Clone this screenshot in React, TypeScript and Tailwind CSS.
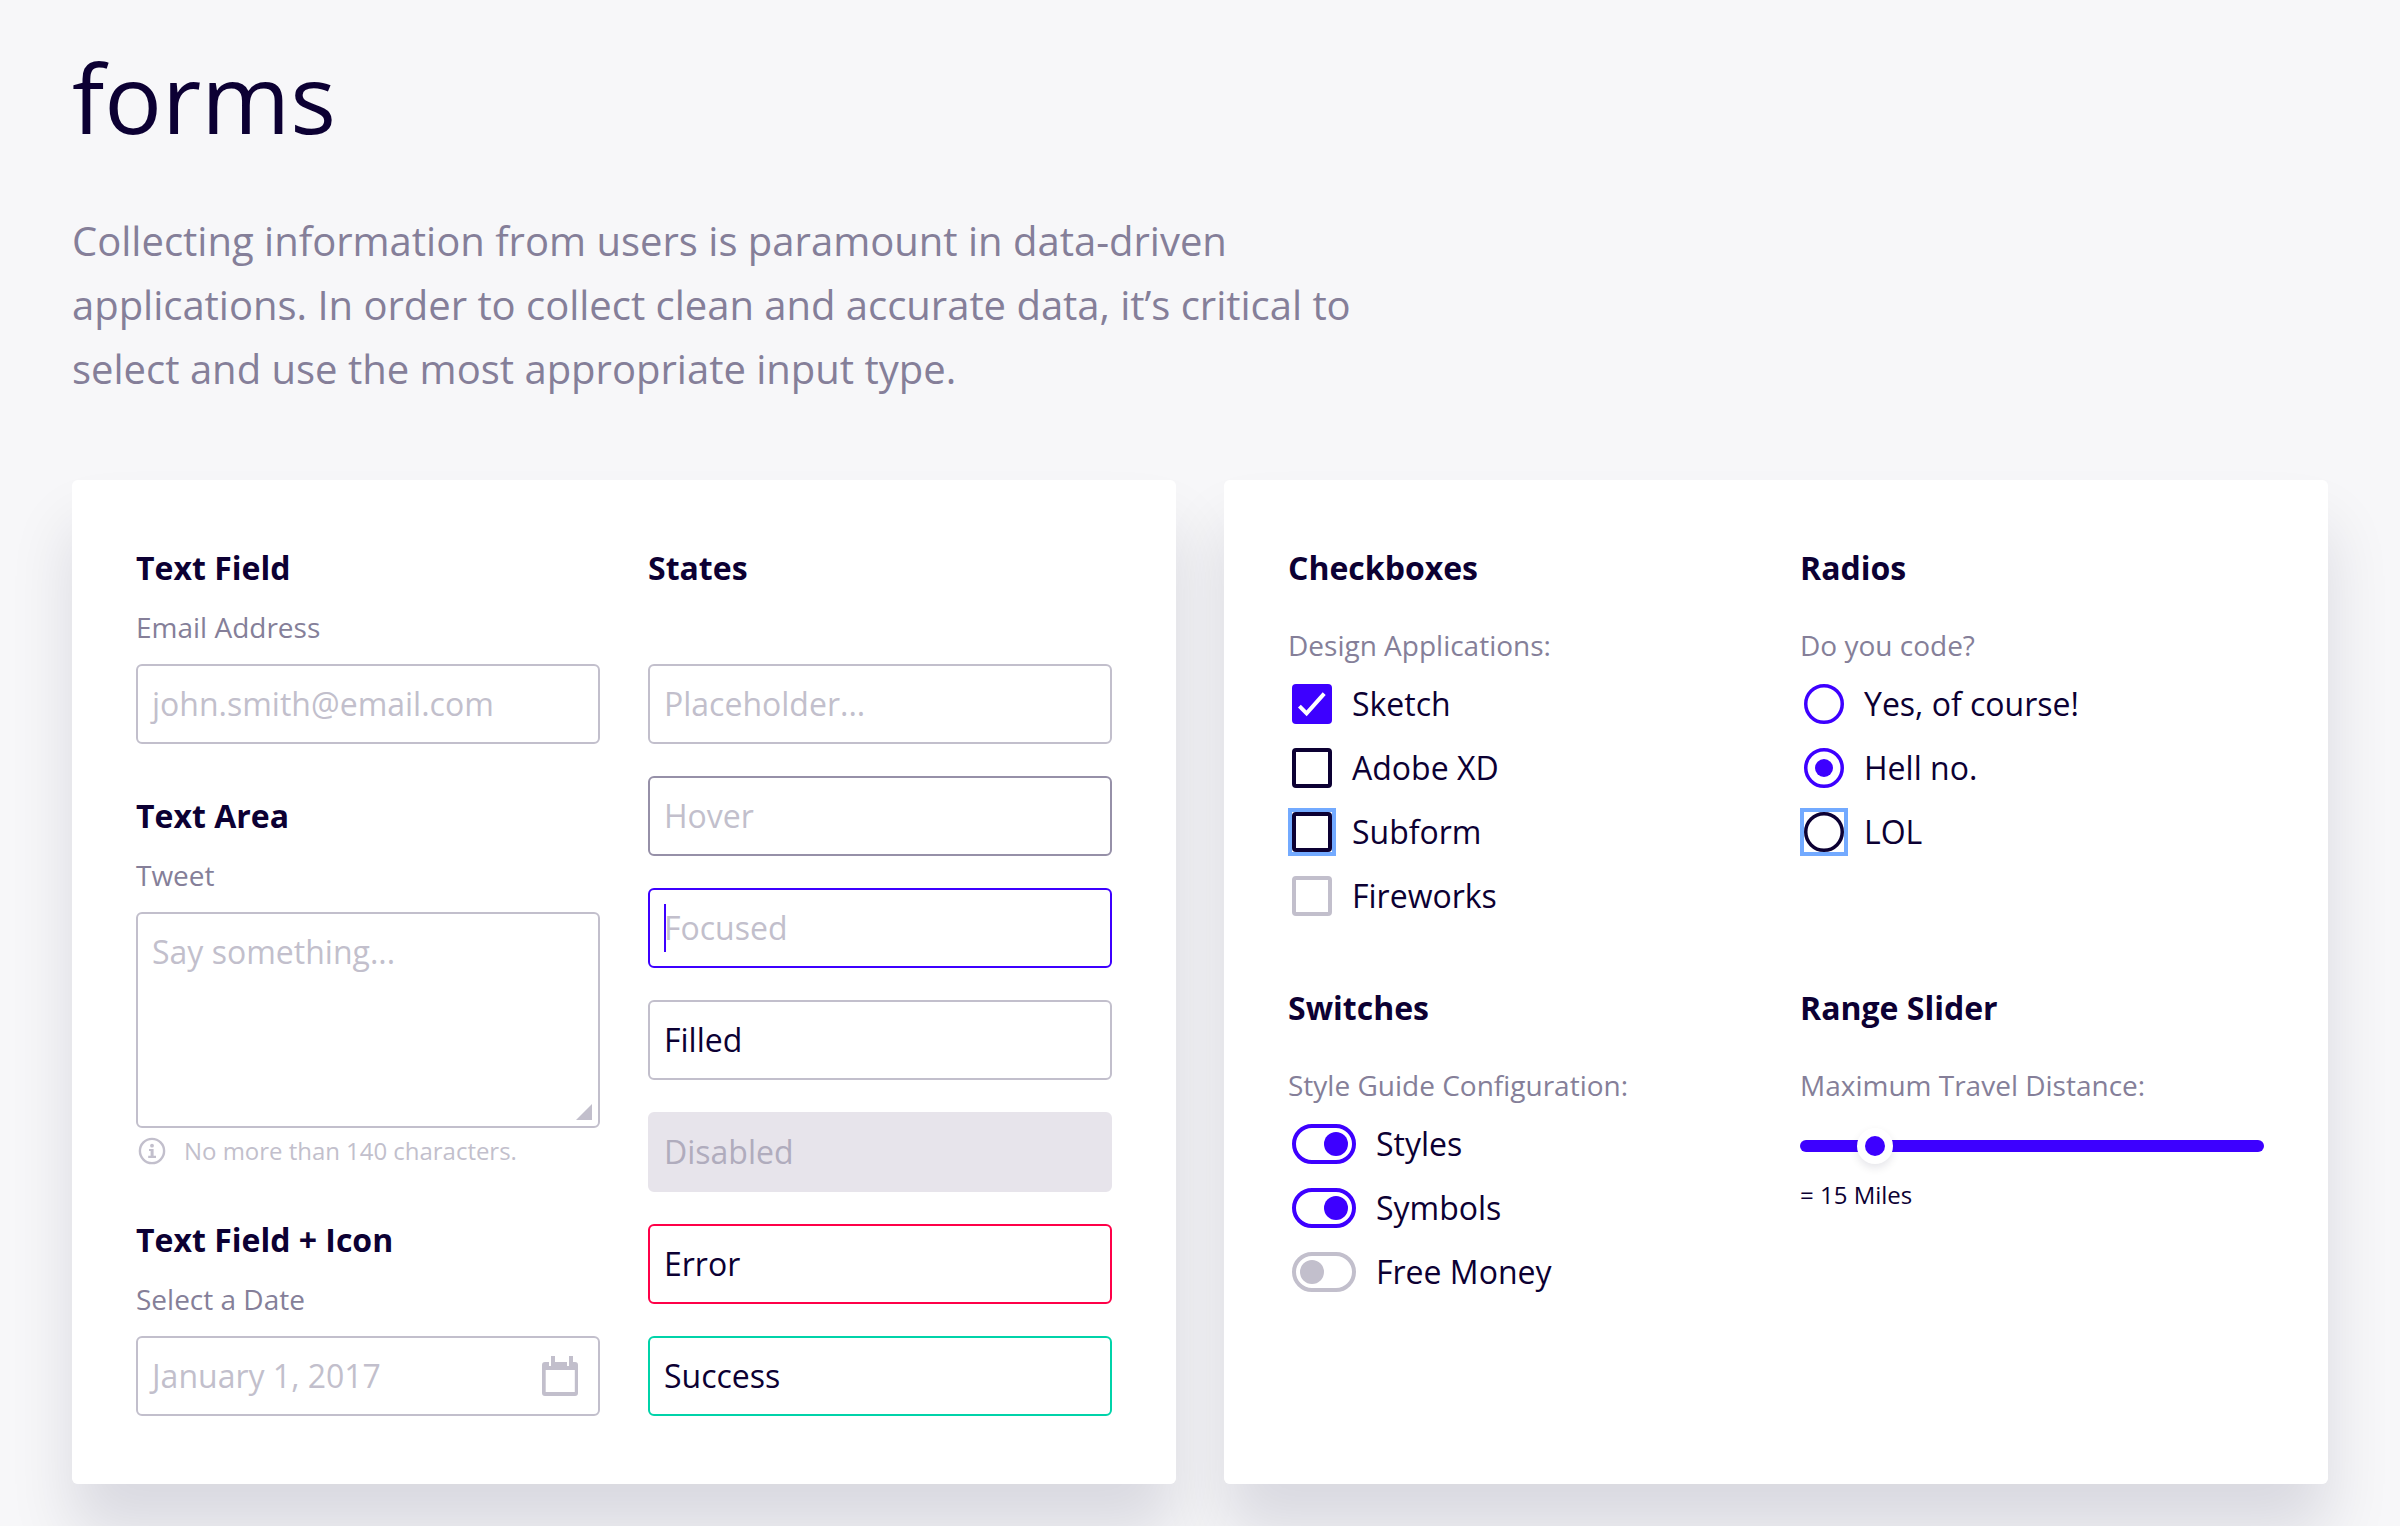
import React from "react";

function Heading({ children }: { children: React.ReactNode }) {
  return <h2 className="text-[32px] leading-[48px] font-bold text-[#0c0033]">{children}</h2>;
}

function FieldLabel({ children }: { children: React.ReactNode }) {
  return <div className="mt-[14px] mb-4 text-[28px] leading-[42px] text-[#857f99]">{children}</div>;
}

function GroupLabel({ children }: { children: React.ReactNode }) {
  return <div className="mt-8 text-[28px] leading-[42px] text-[#857f99]">{children}</div>;
}

function Field({ tone, children }: { tone: string; children: React.ReactNode }) {
  return (
    <div className={`relative flex h-20 items-center justify-between rounded-md border-2 px-[14px] text-[32px] leading-[48px] ${tone}`}>
      {children}
    </div>
  );
}

const EMPTY = "border-[#c2bfcc] text-[#c2bfcc]";

function CalendarIcon() {
  return (
    <svg className="mr-1.5 h-10 w-9" viewBox="0 0 36 40" fill="#c2bfcc">
      <path
        fillRule="evenodd"
        d="M3 6H7V10H9V0H13V6H25V10H27V0H31V6H33A3 3 0 0 1 36 9V37A3 3 0 0 1 33 40H3A3 3 0 0 1 0 37V9A3 3 0 0 1 3 6ZM3.7 14V36H32.8V14Z"
      />
    </svg>
  );
}

function InfoIcon() {
  return (
    <svg className="h-7 w-7" viewBox="0 0 28 28" fill="none">
      <circle cx="14" cy="14" r="12.1" stroke="#c2bfcc" strokeWidth="2.4" />
      <circle cx="14" cy="8.7" r="1.9" fill="#c2bfcc" />
      <path d="M11 12H15.6V18.8H18V21H10.2V18.8H12.6V14H11Z" fill="#c2bfcc" />
    </svg>
  );
}

function OptionRow({ control, children }: { control: React.ReactNode; children: React.ReactNode }) {
  return (
    <div className="flex h-16 items-center gap-5 pl-1 text-[32px] leading-[48px]">
      {control}
      <span>{children}</span>
    </div>
  );
}

function Checkbox({ look }: { look: string }) {
  return <div className={`h-10 w-10 rounded-[4px] border-4 ${look}`} />;
}

function CheckedBox() {
  return (
    <svg className="h-10 w-10" viewBox="0 0 40 40" fill="none">
      <rect width="40" height="40" rx="4" fill="#3d00ff" />
      <path d="M7.4 22.2L14.6 29.4L32.2 9.6" stroke="#fff" strokeWidth="4" />
    </svg>
  );
}

function Radio({ look, checked }: { look: string; checked?: boolean }) {
  return (
    <svg className={`h-10 w-10 ${look}`} viewBox="0 0 40 40" fill="none">
      <circle cx="20" cy="20" r="18.25" stroke="currentColor" strokeWidth="3.5" />
      {checked && <circle cx="20" cy="20" r="9" fill="currentColor" />}
    </svg>
  );
}

function FocusRing({ children }: { children: React.ReactNode }) {
  return <div className="-m-1 border-4 border-[#73aaff]">{children}</div>;
}

function Switch({ on }: { on?: boolean }) {
  return (
    <div
      className={`flex h-10 w-16 items-center rounded-full border-4 px-1 ${
        on ? "justify-end border-[#3d00ff]" : "justify-start border-[#c2bfcc]"
      }`}
    >
      <div className={`h-6 w-6 rounded-full ${on ? "bg-[#3d00ff]" : "bg-[#c2bfcc]"}`} />
    </div>
  );
}

const CARD = "grid h-[1004px] w-[1104px] grid-cols-2 gap-x-12 rounded-md bg-white p-16";
const CARD_SHADOW = "rounded-md shadow-[0_48px_64px_rgba(12,0,51,0.12)]";

export default function App() {
  return (
    <div className="h-[1526px] w-[2400px] overflow-hidden bg-[#f7f7f9] px-[72px] pt-[49px] font-['Open_Sans',sans-serif] text-[#0c0033]">
      <h1 className="text-[96px] leading-[96px]">forms</h1>
      <p className="mt-16 text-[40px] leading-[64px] whitespace-nowrap text-[#857f99]">
        Collecting information from users is paramount in data-driven
        <br />
        <span className="tracking-[-0.02px]">applications. In order to collect clean and accurate data, it’s critical to</span>
        <br />
        select and use the most appropriate input type.
      </p>

      <div className="mt-[79px] flex gap-12">
        <div className={CARD_SHADOW}>
          <section className={`relative z-10 ${CARD}`}>
            <div>
              <Heading>Text Field</Heading>
              <FieldLabel>Email Address</FieldLabel>
              <Field tone={EMPTY}>john.smith@email.com</Field>

              <div className="mt-12">
                <Heading>Text Area</Heading>
                <FieldLabel>Tweet</FieldLabel>
                <div className="relative h-[216px] rounded-md border-2 border-[#c2bfcc] px-[14px] py-[14px] text-[32px] leading-[48px] text-[#c2bfcc]">
                  Say something...
                  <svg className="absolute right-1.5 bottom-1.5 h-4 w-4" viewBox="0 0 16 16">
                    <path d="M16 0V16H0Z" fill="#c2bfcc" />
                  </svg>
                </div>
                <div className="mt-[5px] flex h-9 items-center gap-[18px] pl-0.5 text-[24px] leading-9 text-[#c2bfcc]">
                  <InfoIcon />
                  <span className="tracking-[-0.03px]">No more than 140 characters.</span>
                </div>
              </div>

              <div className="mt-[47px]">
                <Heading>Text Field + Icon</Heading>
                <FieldLabel>Select a Date</FieldLabel>
                <Field tone={EMPTY}>
                  <span>January 1, 2017</span>
                  <CalendarIcon />
                </Field>
              </div>
            </div>

            <div>
              <Heading>States</Heading>
              <div className="mt-[72px] flex flex-col gap-8">
                <Field tone={EMPTY}>Placeholder...</Field>
                <Field tone="border-[#9690a8] text-[#c2bfcc]">Hover</Field>
                <Field tone="border-[#3d00ff] text-[#c2bfcc]">
                  Focused
                  <div className="absolute top-[14px] left-[14px] h-12 w-0.5 bg-[#3d00ff]" />
                </Field>
                <Field tone="border-[#c2bfcc]">Filled</Field>
                <Field tone="border-[#e7e4eb] bg-[#e7e4eb] text-[#b0acbd]">Disabled</Field>
                <Field tone="border-[#ff0048]">Error</Field>
                <Field tone="border-[#00d3a9]">Success</Field>
              </div>
            </div>
          </section>
        </div>

        <div className={CARD_SHADOW}>
          <section className={`relative z-10 grid-rows-[440px_1fr] ${CARD}`}>
            <div>
              <Heading>Checkboxes</Heading>
              <GroupLabel>Design Applications:</GroupLabel>
              <div className="mt-1.5">
                <OptionRow control={<CheckedBox />}>Sketch</OptionRow>
                <OptionRow control={<Checkbox look="border-[#0c0033]" />}>Adobe XD</OptionRow>
                <OptionRow control={<FocusRing><Checkbox look="border-[#0c0033]" /></FocusRing>}>Subform</OptionRow>
                <OptionRow control={<Checkbox look="border-[#c2bfcc]" />}>Fireworks</OptionRow>
              </div>
            </div>

            <div>
              <Heading>Radios</Heading>
              <GroupLabel>Do you code?</GroupLabel>
              <div className="mt-1.5">
                <OptionRow control={<Radio look="text-[#3d00ff]" />}>Yes, of course!</OptionRow>
                <OptionRow control={<Radio look="text-[#3d00ff]" checked />}>Hell no.</OptionRow>
                <OptionRow control={<FocusRing><Radio look="text-[#0c0033]" /></FocusRing>}>LOL</OptionRow>
              </div>
            </div>

            <div>
              <Heading>Switches</Heading>
              <GroupLabel>Style Guide Configuration:</GroupLabel>
              <div className="mt-1.5">
                <OptionRow control={<Switch on />}>Styles</OptionRow>
                <OptionRow control={<Switch on />}>Symbols</OptionRow>
                <OptionRow control={<Switch />}>Free Money</OptionRow>
              </div>
            </div>

            <div>
              <Heading>Range Slider</Heading>
              <GroupLabel>Maximum Travel Distance:</GroupLabel>
              <div className="relative mt-[34px] h-3 rounded-full bg-[#3d00ff]">
                <div className="absolute -top-3 left-[57px] flex h-9 w-9 items-center justify-center rounded-full bg-white shadow-[0_4px_8px_rgba(12,0,51,0.1)]">
                  <div className="h-5 w-5 rounded-full bg-[#3d00ff]" />
                </div>
              </div>
              <div className="mt-[25px] text-[24px] leading-9">= 15 Miles</div>
            </div>
          </section>
        </div>
      </div>
    </div>
  );
}
